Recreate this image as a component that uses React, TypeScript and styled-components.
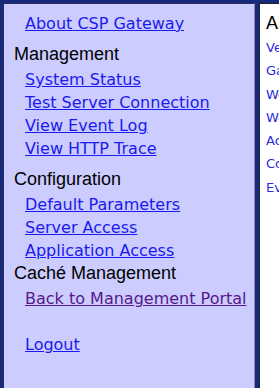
import React from 'react';
import styled, { createGlobalStyle } from 'styled-components';

const GlobalStyle = createGlobalStyle`
  html, body {
    margin: 0;
    padding: 0;
    height: 100%;
    overflow: hidden;
  }
  #root {
    height: 100%;
  }
`;

type Item =
  | { kind: 'link'; label: string; visited?: boolean }
  | { kind: 'heading'; label: string; gap: number }
  | { kind: 'blank' };

const menu: Item[] = [
  { kind: 'link', label: 'About CSP Gateway' },
  { kind: 'heading', label: 'Management', gap: 8 },
  { kind: 'link', label: 'System Status' },
  { kind: 'link', label: 'Test Server Connection' },
  { kind: 'link', label: 'View Event Log' },
  { kind: 'link', label: 'View HTTP Trace' },
  { kind: 'heading', label: 'Configuration', gap: 8 },
  { kind: 'link', label: 'Default Parameters' },
  { kind: 'link', label: 'Server Access' },
  { kind: 'link', label: 'Application Access' },
  { kind: 'heading', label: 'Caché Management', gap: 0 },
  { kind: 'link', label: 'Back to Management Portal', visited: true },
  { kind: 'blank' },
  { kind: 'link', label: 'Logout' },
];

const details = [
  'Version:',
  'Gateway Build:',
  'Web Server Name:',
  'Web Server Type:',
  'Active Configuration:',
  'Configuration File:',
  'Event Log File:',
];

export default function App() {
  return (
    <>
      <GlobalStyle />
      <Frameset>
        <MenuFrame>
          {menu.map((item, i) => {
            if (item.kind === 'heading') {
              return (
                <Heading key={i} $gap={item.gap}>
                  {item.label}
                </Heading>
              );
            }
            if (item.kind === 'blank') return <Blank key={i} />;
            return (
              <LinkRow key={i}>
                <MenuLink href="#" $visited={item.visited}>
                  {item.label}
                </MenuLink>
              </LinkRow>
            );
          })}
        </MenuFrame>
        <ContentFrame>
          <Title>About CSP Gateway</Title>
          {details.map((d) => (
            <DetailRow key={d}>{d}</DetailRow>
          ))}
        </ContentFrame>
      </Frameset>
    </>
  );
}

const Frameset = styled.div`
  display: flex;
  height: 100%;
  background-color: #17297d;
  padding: 3px 0 0 3px;
  box-sizing: border-box;
  gap: 4px;
`;

const MenuFrame = styled.div`
  width: 252px;
  flex-shrink: 0;
  background-color: #ccccff;
  border-top: 1px solid #2a2f55;
  border-left: 1px solid #2a2f55;
  border-right: 1px solid #8a8cb8;
  box-sizing: border-box;
  padding: 8px 0 0 0;
  display: flex;
  flex-direction: column;
`;

const LinkRow = styled.div`
  height: 23px;
  line-height: 23px;
  padding-left: 21px;
  white-space: nowrap;
`;

const MenuLink = styled.a<{ $visited?: boolean }>`
  font-family: 'DejaVu Sans', Verdana, sans-serif;
  font-size: 16px;
  color: ${(p) => (p.$visited ? '#551a8b' : '#1a1aee')};
  text-decoration: underline;
`;

const Heading = styled.div<{ $gap: number }>`
  font-family: 'Liberation Sans', Arial, sans-serif;
  font-size: 18px;
  line-height: 22px;
  color: #000;
  padding-left: 10px;
  margin-top: ${(p) => p.$gap}px;
  margin-bottom: 3px;
  white-space: nowrap;
`;

const Blank = styled.div`
  height: 23px;
`;

const ContentFrame = styled.div`
  flex: 1;
  min-width: 0;
  overflow: hidden;
  background-color: #fff;
  border-top: 1px solid #222;
  border-left: 1px solid #222;
  padding: 6px 0 0 6px;
  box-sizing: border-box;
`;

const Title = styled.div`
  font-family: 'Liberation Sans', Arial, sans-serif;
  font-size: 18px;
  line-height: 26px;
  color: #000;
  white-space: nowrap;
`;

const DetailRow = styled.div`
  font-family: 'DejaVu Sans', Verdana, sans-serif;
  font-size: 13px;
  line-height: 23.3px;
  color: #2a2ae0;
  white-space: nowrap;
`;
